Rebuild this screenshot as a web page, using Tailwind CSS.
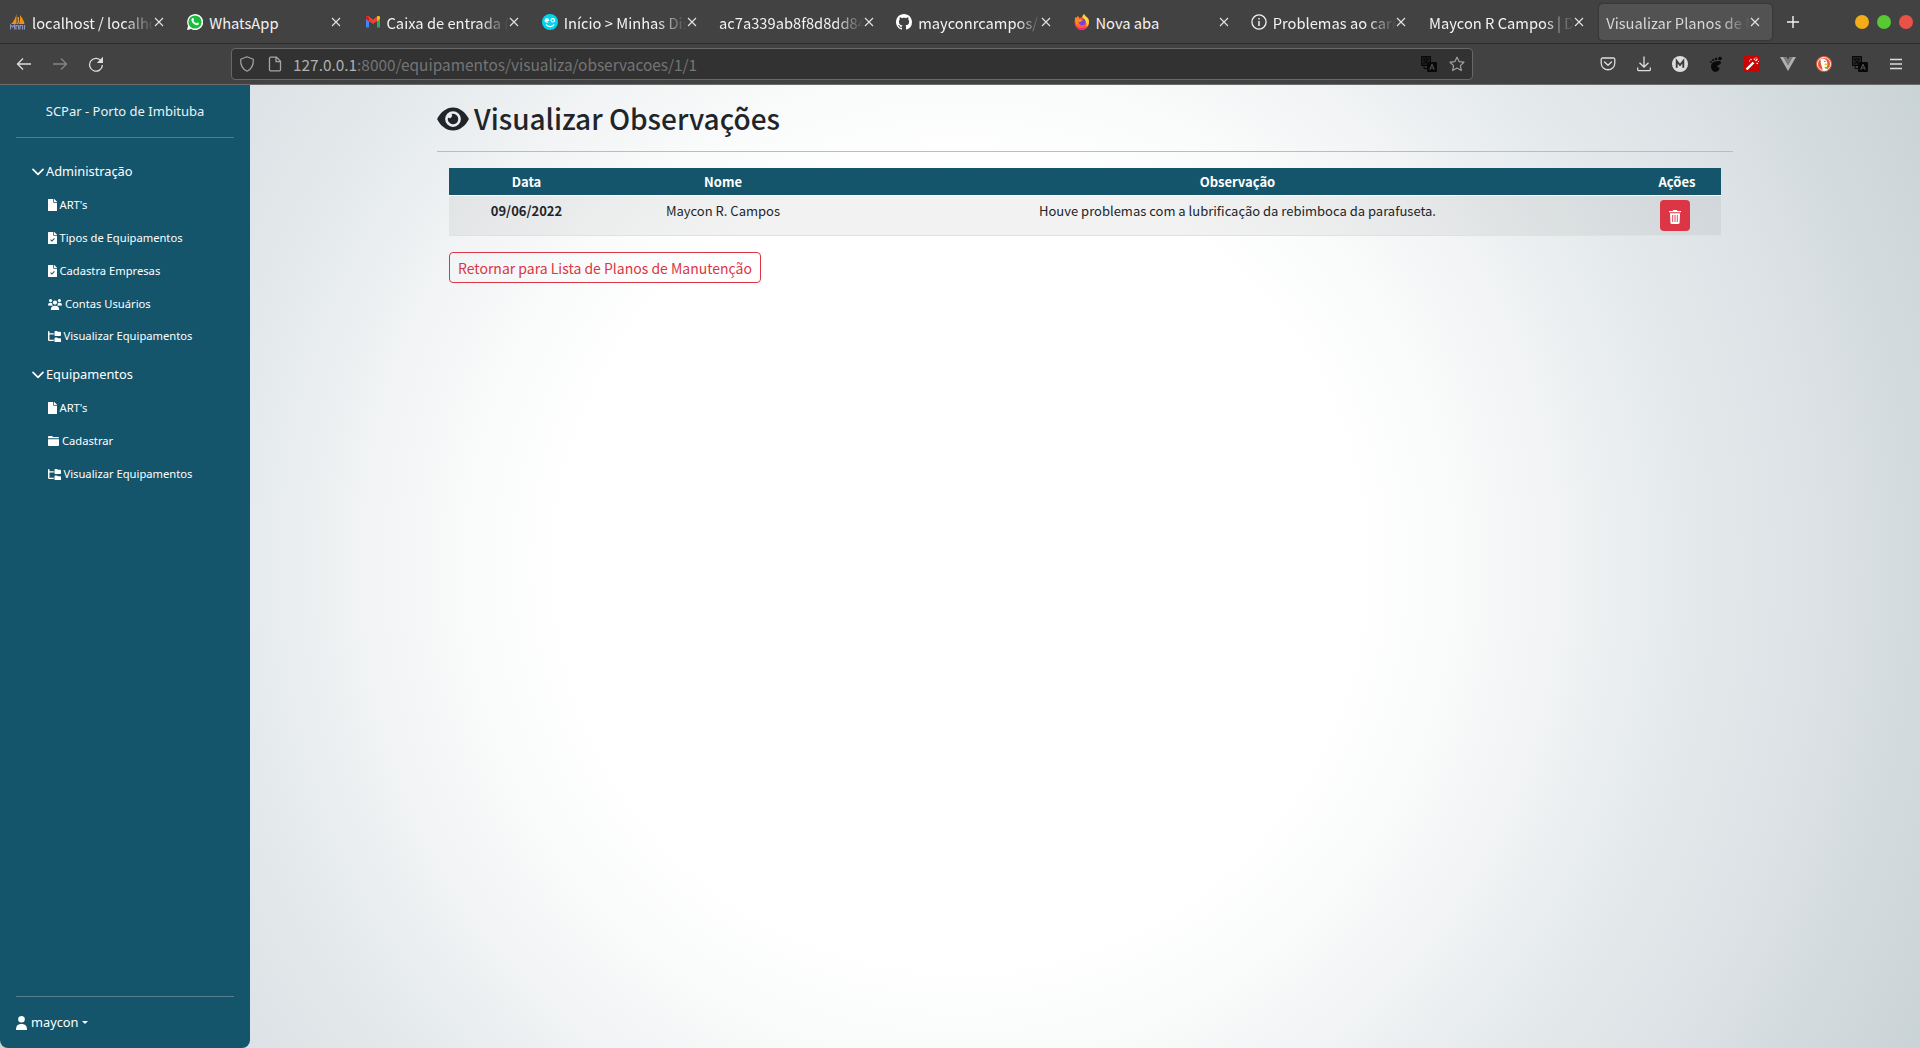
<!DOCTYPE html>
<html lang="pt-BR">
<head>
<meta charset="utf-8">
<title>Visualizar Planos de Manutenção</title>
<script src="https://cdn.jsdelivr.net/npm/@tailwindcss/browser@4"></script>
</head>
<body class="w-[1920px] h-[1048px] overflow-hidden flex flex-col font-['Noto_Sans_CJK_JP','Noto_Sans',sans-serif] text-[#212529]">
<svg class="hidden">
  <symbol id="x" viewBox="0 0 10 10"><path d="M1 1l8 8M9 1l-8 8" stroke="#e4e4e4" stroke-width="1.1" fill="none"/></symbol>
  <symbol id="file" viewBox="0 0 384 512"><path fill="#fff" d="M224 136V0H24C10.700 0 0 10.700 0 24v464c0 13.300 10.700 24 24 24h336c13.300 0 24-10.700 24-24V160H248c-13.200 0-24-10.800-24-24zm160-14.100v6.100H256V0h6.100c6.400 0 12.500 2.500 17 7l97.900 98c4.500 4.500 7 10.600 7 16.900z"/></symbol>
  <symbol id="filecheck" viewBox="0 0 384 512"><path fill="#fff" d="M224 136V0H24C10.700 0 0 10.700 0 24v464c0 13.300 10.700 24 24 24h336c13.300 0 24-10.700 24-24V160H248c-13.200 0-24-10.800-24-24zm160-14.100v6.100H256V0h6.100c6.400 0 12.500 2.500 17 7l97.900 98c4.500 4.500 7 10.600 7 16.900z"/><path d="M110 330l55 55 110-115" fill="none" stroke="#15556b" stroke-width="46"/></symbol>
  <symbol id="tree" viewBox="0 0 576 512"><path fill="#fff" d="M64 32C64 14.300 49.700 0 32 0S0 14.300 0 32v352c0 35.300 28.700 64 64 64h192v-64H64V160h192V96H64V32zm224 160c0 17.700 14.300 32 32 32h224c17.700 0 32-14.300 32-32V64c0-17.700-14.300-32-32-32h-98.700c-8.500 0-16.600-3.400-22.600-9.400L409.400 9.400C403.400 3.400 395.200 0 386.700 0H320c-17.700 0-32 14.300-32 32v160zm0 288c0 17.700 14.300 32 32 32h224c17.700 0 32-14.300 32-32V352c0-17.700-14.300-32-32-32h-98.700c-8.500 0-16.600-3.400-22.600-9.400l-13.300-13.300c-6-6-14.100-9.400-22.600-9.400H320c-17.700 0-32 14.300-32 32v160z"/></symbol>
  <symbol id="chev" viewBox="0 0 12 8"><path d="M1 1.300l5 5 5-5" stroke="#fff" stroke-width="1.700" fill="none" stroke-linecap="round" stroke-linejoin="round"/></symbol>
  <symbol id="translate" viewBox="0 0 16 16"><path d="M0 0h10v6H6v4H0z" fill="#080808" fill-opacity=".55"/><path d="M.5.500h9v9h-9zM2 3h6M5 1.800V3M6.800 3.200C6 5.500 4.500 6.800 2.500 7.500M3 3.500c.8 2 2.500 3.500 4.500 4M3 9.500v3h3" fill="none" stroke="#080808"/><rect x="6" y="6" width="10" height="10" rx="1.200" fill="#080808"/><path d="M8.700 13.800l2.300-5.600 2.300 5.600M9.500 12h3" stroke="#555" fill="none"/></symbol>
</svg>

<header class="shrink-0 h-[85px] flex flex-col bg-[#424242] border-b border-[#6b6b6b] text-[14.700px]">
  <div class="h-[44px] shrink-0 flex items-center border-b border-[#2b2b2b] text-[#f2f2f2] whitespace-nowrap">
    <nav class="flex items-center pl-[2px] w-[1775px]">
      <div class="w-[177.250px] shrink-0 h-9 flex items-center pl-2">
        <svg class="size-4 mr-[6px]" viewBox="0 0 16 16"><path d="M6.500 0v10H1C3.500 8 5.500 4 6.500 0zM10 1c2.500 3 4 6 4.500 9H9c1-3 1.300-6 1-9z" fill="#f29111"/><path d="M8 3c.6 3 .3 5-.3 7" stroke="#ffc46b" fill="none"/><path d="M.500 15.500V11l2 2 2-2v4.500M6 15.500V11.500h2.500v4M10 15.500v-4h2.500v4M14.500 11v4.500" stroke="#8d90b8" fill="none" stroke-width="1.200"/></svg>
        <span class="w-[122px] shrink-0 overflow-hidden pt-[3px] [mask-image:linear-gradient(to_left,transparent,black_30px)]">localhost / localho</span><svg class="size-[10px]"><use href="#x"/></svg>
      </div>
      <div class="w-[177.250px] shrink-0 h-9 flex items-center pl-2">
        <svg class="size-4 mr-[6px]" viewBox="0 0 16 16"><path d="M0 16l1.100-4.200A8 8 0 1 1 4.200 15z" fill="#fff"/><circle cx="8" cy="8" r="6.600" fill="#18bd3d"/><path d="M5.300 4.200c.4-.4 1-.3 1.200.2l.5 1.200c.1.400-.5.900-.6 1.100.6 1.200 1.500 2 2.800 2.600.3-.1.800-1 1.100-.9l1.400.7c.4.200.2 1-.1 1.400-.7.800-1.800.9-2.800.5-2.300-.8-3.700-2.400-4.300-4.200-.3-1 .1-2 .8-2.600z" fill="#fff"/></svg>
        <span class="w-[122px] shrink-0 overflow-hidden pt-[3px]">WhatsApp</span><svg class="size-[10px]"><use href="#x"/></svg>
      </div>
      <div class="w-[177.250px] shrink-0 h-9 flex items-center pl-2">
        <svg class="size-4 mr-[6px]" viewBox="0 0 16 16"><path d="M1 4v9.500h3V7z" fill="#4285f4"/><path d="M15 4v9.500h-3V7z" fill="#34a853"/><path d="M1 3.500C1 2 3 1.700 4 2.500L8 5.600l4-3.100c1-.8 3-.5 3 1V5L8 10 1 5z" fill="#ea4335"/><path d="M12 2.500c1-.8 3-.5 3 1V5l-3 2.200z" fill="#fbbc04"/><path d="M1 3.500C1 2.600 1.500 2.200 2 2.100L4 4v3.200L1 5z" fill="#c5221f"/></svg>
        <span class="w-[122px] shrink-0 overflow-hidden pt-[3px] [mask-image:linear-gradient(to_left,transparent,black_30px)]">Caixa de entrada (</span><svg class="size-[10px]"><use href="#x"/></svg>
      </div>
      <div class="w-[177.250px] shrink-0 h-9 flex items-center pl-2">
        <svg class="size-4 mr-[6px]" viewBox="0 0 16 16"><circle cx="8" cy="8" r="8" fill="#00d5ee"/><path d="M3.200 6.300h3.400A1.700 1.700 0 1 0 6 7.800M4 10.500c2 2.700 6.300 2.700 8.200 0" stroke="#fff" stroke-width="1.200" fill="none"/><circle cx="10.800" cy="6.300" r="1.700" stroke="#fff" stroke-width="1.200" fill="none"/></svg>
        <span class="w-[123px] shrink-0 overflow-hidden pt-[3px] [mask-image:linear-gradient(to_left,transparent,black_30px)]">Início &gt; Minhas Dis</span><svg class="size-[10px]"><use href="#x"/></svg>
      </div>
      <div class="w-[177.250px] shrink-0 h-9 flex items-center pl-2">
        <span class="w-[145px] shrink-0 overflow-hidden pt-[3px] [mask-image:linear-gradient(to_left,transparent,black_30px)]">ac7a339ab8f8d8dd84</span><svg class="size-[10px]"><use href="#x"/></svg>
      </div>
      <div class="w-[177.250px] shrink-0 h-9 flex items-center pl-2">
        <svg class="size-4 mr-[6px]" viewBox="0 0 16 16"><path fill="#fff" d="M8 0C3.580 0 0 3.580 0 8c0 3.540 2.290 6.530 5.470 7.590.4.070.55-.17.55-.38 0-.19-.01-.82-.01-1.490-2.010.37-2.530-.49-2.690-.94-.09-.23-.48-.94-.82-1.130-.28-.15-.68-.52-.01-.53.63-.01 1.080.58 1.230.82.72 1.210 1.870.87 2.330.66.070-.52.28-.87.51-1.070-1.780-.2-3.640-.89-3.640-3.950 0-.87.31-1.590.82-2.150-.08-.2-.36-1.020.08-2.120 0 0 .67-.21 2.200.82.64-.18 1.320-.27 2-.27s1.360.09 2 .27c1.530-1.040 2.200-.82 2.200-.82.44 1.100.16 1.920.08 2.120.51.56.82 1.270.82 2.150 0 3.070-1.870 3.750-3.650 3.950.29.25.54.73.54 1.480 0 1.070-.01 1.930-.01 2.200 0 .21.15.46.55.38A8.010 8.010 0 0 0 16 8c0-4.420-3.580-8-8-8z"/></svg>
        <span class="w-[123px] shrink-0 overflow-hidden pt-[3px] [mask-image:linear-gradient(to_left,transparent,black_24px)]">mayconrcampos/</span><svg class="size-[10px]"><use href="#x"/></svg>
      </div>
      <div class="w-[177.250px] shrink-0 h-9 flex items-center pl-2">
        <svg class="size-4 mr-[6px]" viewBox="0 0 16 16"><path d="M1.500 3l1 1L4 2l1 2c1-.6 2-.7 3-.5C8.200 2 9 .8 10 0c.3 1.500 1.500 2 2.300 3.200C13 3 13.500 3.500 14 4c3 5-.5 12-6 12C2 16-1 9 1.500 3z" fill="#ff5a36"/><path d="M8.500 3.500C8.500 2 9.200.8 10 0c.4 1.600 3 2.500 4.300 5 1.500 3.500.2 7-2.300 8 1.500-3 0-7-3.500-9.500z" fill="#ffd52e"/><path d="M1.500 3l1 1L4 2l1 2c-1.500 3-1 6 1 8-3-.5-6-4-4.500-9z" fill="#ff8a16"/><circle cx="8.200" cy="8" r="3.200" fill="#7542e5"/><path d="M4 6c2-1.300 4-.8 4.800.5C7.500 6.500 7 8 5 8z" fill="#ff9a20"/><path d="M2 12c3 3 8 3 11 0-2 5-9 5-11 0z" fill="#f5207e"/></svg>
        <span class="w-[123px] shrink-0 overflow-hidden pt-[3px]">Nova aba</span><svg class="size-[10px]"><use href="#x"/></svg>
      </div>
      <div class="w-[177.250px] shrink-0 h-9 flex items-center pl-2">
        <svg class="size-4 mr-[6px]" viewBox="0 0 16 16"><circle cx="8" cy="8" r="7.100" stroke="#f2f2f2" stroke-width="1.300" fill="none"/><path d="M8 7v5M8 4v1.500" stroke="#f2f2f2" stroke-width="1.500"/></svg>
        <span class="w-[123px] shrink-0 overflow-hidden pt-[3px] [mask-image:linear-gradient(to_left,transparent,black_30px)]">Problemas ao carr</span><svg class="size-[10px]"><use href="#x"/></svg>
      </div>
      <div class="w-[177.250px] shrink-0 h-9 flex items-center pl-[9px]">
        <span class="w-[145px] shrink-0 overflow-hidden pt-[3px] [mask-image:linear-gradient(to_left,transparent,black_30px)]">Maycon R Campos | D</span><svg class="size-[10px]"><use href="#x"/></svg>
      </div>
      <div class="w-[173px] ml-[2px] shrink-0 h-9 flex items-center pl-[7px] rounded bg-[#525252] shadow-[0_0_2px_#222] text-[#d6d6d6]">
        <span class="w-[144px] shrink-0 overflow-hidden pt-[3px] [mask-image:linear-gradient(to_left,transparent,black_30px)]">Visualizar Planos de M</span><svg class="size-[10px]"><use href="#x"/></svg>
      </div>
    </nav>
    <svg class="size-3 ml-[12px]" viewBox="0 0 12 12"><path d="M6 0v12M0 6h12" stroke="#f2f2f2" stroke-width="1.400"/></svg>
    <div class="flex gap-2 ml-[56px]"><i class="size-[14px] rounded-full bg-[#f2ad18]"></i><i class="size-[14px] rounded-full bg-[#57c934]"></i><i class="size-[14px] rounded-full bg-[#ea5147]"></i></div>
  </div>
  <div class="h-[40px] flex items-center">
    <svg class="w-4 h-4 ml-4" viewBox="0 0 16 16"><path d="M15 8H1.500M7 2.500L1.500 8 7 13.500" stroke="#ddd" stroke-width="1.300" fill="none"/></svg>
    <svg class="w-4 h-4 ml-5" viewBox="0 0 16 16"><path d="M1 8h13.500M9 2.500L14.500 8 9 13.500" stroke="#858585" stroke-width="1.300" fill="none"/></svg>
    <svg class="w-4 h-4 ml-5" viewBox="0 0 16 16"><path d="M13.500 5.500A6.400 6.400 0 1 0 14.400 9" stroke="#ddd" stroke-width="1.300" fill="none"/><path d="M15 .8V7H8.800z" fill="#ddd"/></svg>
    <div class="ml-[127px] w-[1242px] h-[32px] rounded border border-[#686868] bg-[#323232] flex items-center">
      <svg class="w-4 h-4 ml-[7px]" viewBox="0 0 16 16"><path d="M8 .800l6.300 2.400c.3 5-1.500 9.800-6.300 12C3.200 13 1.400 8.200 1.700 3.200z" stroke="#a5a5a5" stroke-width="1.200" fill="none" stroke-linejoin="round"/></svg>
      <svg class="w-4 h-4 ml-3" viewBox="0 0 16 16"><path d="M3.500 1.200h6l4 4v8.600a1 1 0 0 1-1 1h-9a1 1 0 0 1-1-1V2.200a1 1 0 0 1 1-1zM9 1.200v4.500h4.500" stroke="#a5a5a5" stroke-width="1.300" fill="none"/></svg>
      <span class="ml-[10px] pt-px text-[15.400px] text-[#757575]"><span class="text-[#b0b0b0]">127.0.0.1</span>:8000/equipamentos/visualiza/observacoes/1/1</span>
      <svg class="size-4 ml-auto"><use href="#translate"/></svg>
      <svg class="size-4 ml-3 mr-[7px]" viewBox="0 0 16 16"><path d="M8 1.200l2.100 4.400 4.800.6-3.500 3.400.9 4.900L8 12.100l-4.300 2.400.9-4.900L1.100 6.200l4.800-.6z" stroke="#a0a0a0" stroke-width="1.200" fill="none" stroke-linejoin="round"/></svg>
    </div>
    <div class="flex items-center gap-5 ml-[127px]">
      <svg class="size-4" viewBox="0 0 16 16"><path d="M2.500 2h11a1.300 1.300 0 0 1 1.300 1.300V7c0 9-13.600 9-13.600 0V3.300A1.300 1.300 0 0 1 2.500 2zM4.500 6L8 9.300 11.500 6" stroke="#ddd" stroke-width="1.300" fill="none" stroke-linecap="round" stroke-linejoin="round"/></svg>
      <svg class="size-4" viewBox="0 0 16 16"><path d="M8 .5v10.500M3.500 6.800L8 11l4.500-4.200M1.700 11.500v2c0 .8.400 1.200 1.200 1.200h10.200c.8 0 1.200-.4 1.200-1.200v-2" stroke="#ddd" stroke-width="1.300" fill="none"/></svg>
      <svg class="size-4" viewBox="0 0 16 16"><circle cx="8" cy="8" r="8" fill="#ddd"/><path d="M4.700 11.700V5L8 9l3.300-4v6.700" stroke="#3c3c3c" stroke-width="1.900" fill="none"/></svg>
      <svg class="size-4" viewBox="0 0 16 16"><g fill="#0a0a0a"><path d="M7 5.500c3-1 6-.8 6 1 0 2-2.500 2.300-3.700 3.300-.7.700-.3 1.200.5 1.200 1.400 0 1.800 1 1.400 2.200-.6 1.900-2.200 2.600-3.900 2.600C4.500 15.800 3 13 3 10.500 3 8 4.500 6.300 7 5.500z"/><ellipse cx="12" cy="2.500" rx="2" ry="1.700"/><circle cx="8" cy="3" r="1.200"/><circle cx="5.200" cy="4.100" r="1.100"/><circle cx="3" cy="6" r=".9"/></g></svg>
      <svg class="size-4" viewBox="0 0 16 16"><path d="M0 0h16v16H0z" fill="#c80505"/><path d="M2.500 13.500l7-7" stroke="#fff" stroke-width="2.400"/><path d="M10 2.500l.7 1.500M13.500 3l-2 2M12.500 7l1.500.7M6.500 3l1 1M12 1.500v1M5 5h1M14 5.500h1" stroke="#fff" stroke-width="1.100"/></svg>
      <svg class="size-4" viewBox="0 0 16 16"><path d="M0 1h3.500L8 9l4.500-8H16L8 15z" fill="#b0b0b0"/><path d="M3.500 1h3L8 3.800 9.500 1h3L8 9z" fill="#7d7d7d"/></svg>
      <svg class="size-4" viewBox="0 0 16 16"><circle cx="8" cy="8" r="8" fill="#e2593a"/><circle cx="8" cy="8" r="6.500" fill="none" stroke="#fff" stroke-width=".9"/><path d="M4.500 3.200c3.500-1.600 7 .8 6.800 4l-.3 5 .3 2H6.800L4.800 7z" fill="#fff"/><path d="M8.500 7.500l4 .2-1 1.600-3-.3z" fill="#fdb913"/><path d="M8.500 11l3.500-.5v2.500l-3-.5z" fill="#65bc46"/><circle cx="8.900" cy="5.300" r=".6" fill="#234"/></svg>
      <svg class="size-4"><use href="#translate"/></svg>
      <svg class="size-4" viewBox="0 0 16 16"><path d="M2 3.500h12M2 8h12M2 12.500h12" stroke="#ddd" stroke-width="1.300"/></svg>
    </div>
  </div>
</header>

<div class="flex-1 flex min-h-0 bg-[radial-gradient(circle_at_center,#fff_0%,#fff_37%,#fafbfb_45%,#f2f4f5_55%,#e5eaec_67%,#dce2e5_80%,#d1d9dc_91%,#cad3d5_100%)]">
  <aside class="w-[250px] shrink-0 bg-[#15556b] rounded-b-lg px-4 flex flex-col text-white font-['Noto_Sans',sans-serif] text-[13px]">
    <div class="h-[53px] pt-px flex items-center justify-center border-b border-[#4c7d8d] text-[#edf2f4]">SCPar - Porto de Imbituba</div>
    <nav class="pl-4 pt-[17px]">
      <div class="h-[34px] flex items-center gap-[2px] text-[12.800px]"><svg class="w-3 h-2"><use href="#chev"/></svg>Administração</div>
      <ul class="pl-4 text-[11.200px] [&>li]:h-[32.800px] [&>li]:flex [&>li]:items-center">
        <li><svg class="w-[9px] h-3 mr-[2.500px]"><use href="#file"/></svg>ART's</li>
        <li><svg class="w-[9px] h-3 mr-[2.500px]"><use href="#filecheck"/></svg>Tipos de Equipamentos</li>
        <li><svg class="w-[9px] h-3 mr-[2.500px]"><use href="#filecheck"/></svg>Cadastra Empresas</li>
        <li class="pt-px"><svg class="w-[14px] h-[11px] mr-[3px]" viewBox="0 0 14 11"><g fill="#fff"><circle cx="2.600" cy="1.600" r="1.600"/><circle cx="11.400" cy="1.600" r="1.600"/><circle cx="7" cy="3.600" r="2.100"/><path d="M0 6.500C0 4.500 1 3.800 2.500 3.800c.8 0 1.400.2 1.800.6-.2 1 0 1.800.6 2.400zM14 6.500c0-2-1-2.700-2.500-2.700-.8 0-1.400.2-1.800.6.2 1 0 1.800-.6 2.400zM2.800 11c0-3 1.500-4.300 4.200-4.300s4.200 1.300 4.200 4.300z"/></g></svg>Contas Usuários</li>
        <li><svg class="w-[13px] h-[11.500px] mr-[2.500px]"><use href="#tree"/></svg>Visualizar Equipamentos</li>
      </ul>
      <div class="h-[34px] mt-[5px] flex items-center gap-[2px] text-[12.800px]"><svg class="w-3 h-2"><use href="#chev"/></svg>Equipamentos</div>
      <ul class="pl-4 text-[11.200px] [&>li]:h-[33px] [&>li]:flex [&>li]:items-center">
        <li><svg class="w-[9px] h-3 mr-[2.500px]"><use href="#file"/></svg>ART's</li>
        <li><svg class="w-[11px] h-[10px] mr-[3px]" viewBox="0 0 11 10"><path d="M0 2.200V1a1 1 0 0 1 1-1h3l1.200 1H10a1 1 0 0 1 1 1v.2zM0 3.200h11V9a1 1 0 0 1-1 1H1a1 1 0 0 1-1-1z" fill="#fff"/></svg>Cadastrar</li>
        <li><svg class="w-[13px] h-[11.500px] mr-[2.500px]"><use href="#tree"/></svg>Visualizar Equipamentos</li>
      </ul>
    </nav>
    <div class="mt-auto h-[52px] border-t border-[#577f8e] flex items-center text-[12.800px]"><svg class="w-[11px] h-[14px] mr-1" viewBox="0 0 11 14"><circle cx="5.500" cy="3.300" r="3.300" fill="#fff"/><path d="M0 14c0-4 1.500-6 5.500-6s5.500 2 5.500 6z" fill="#fff"/></svg>maycon<i class="ml-1 border-x-[3px] border-t-[3px] border-x-transparent border-t-white"></i></div>
  </aside>

  <main class="ml-[187px] w-[1296px]">
    <h2 class="h-[67px] border-b border-[#b9bdbe] flex items-start pt-[12px] text-[28px] leading-[42px] font-medium"><svg class="w-8 h-[28px] mr-[5px] mt-[8px]" viewBox="0 0 576 512"><path fill="#212529" d="M572.500 241.400C518.300 135.600 410.900 44 288 44S57.700 135.600 3.500 241.400a32.400 32.400 0 0 0 0 29.200C57.700 376.400 165.100 468 288 468s230.300-91.600 284.500-197.400a32.400 32.400 0 0 0 0-29.200zM288 400a144 144 0 1 1 144-144 143.900 143.900 0 0 1-144 144zm0-240a95.300 95.300 0 0 0-25.300 3.800 47.900 47.900 0 0 1-66.900 66.900A95.800 95.800 0 1 0 288 160z"/></svg>Visualizar Observações</h2>
    <table class="mt-4 ml-3 w-[1272px] table-fixed text-center text-[13px] leading-[20px]">
      <colgroup><col class="w-[155px]"><col class="w-[238px]"><col class="w-[791px]"><col class="w-[88px]"></colgroup>
      <thead class="bg-[#15556b] text-white"><tr class="h-[27px] border-b border-white [&>th]:pt-[2px]"><th>Data</th><th>Nome</th><th>Observação</th><th>Ações</th></tr></thead>
      <tbody><tr class="h-[40px] align-top bg-black/5 border-b border-[#dee2e6]"><td class="pt-[5px] font-bold">09/06/2022</td><td class="pt-[5px]">Maycon R. Campos</td><td class="pt-[5px]">Houve problemas com a lubrificação da rebimboca da parafuseta.</td><td class="pt-[4px]"><div class="w-[30px] h-[31px] ml-[27px] rounded bg-[#dc3545] flex items-center justify-center"><svg class="w-3 h-[14px] mt-[3px]" viewBox="0 0 12 14"><path d="M0 1.500V.9h3.500L4.200 0h3.600l.7.900H12v1.400H0z" fill="#fff"/><path d="M1 3.300h10l-.4 9.500A1.200 1.200 0 0 1 9.500 14h-7a1.200 1.200 0 0 1-1.100-1.200z" fill="#fff"/><path d="M3.700 5v7M6 5v7M8.300 5v7" stroke="#dc3545" stroke-width=".9"/></svg></div></td></tr></tbody>
    </table>
    <a class="ml-3 mt-4 w-[312px] h-[31px] rounded border border-[#dc3545] text-[#dc3545] text-[14px] flex items-center justify-center pt-[2px] whitespace-nowrap">Retornar para Lista de Planos de Manutenção</a>
  </main>
</div>
</body>
</html>
